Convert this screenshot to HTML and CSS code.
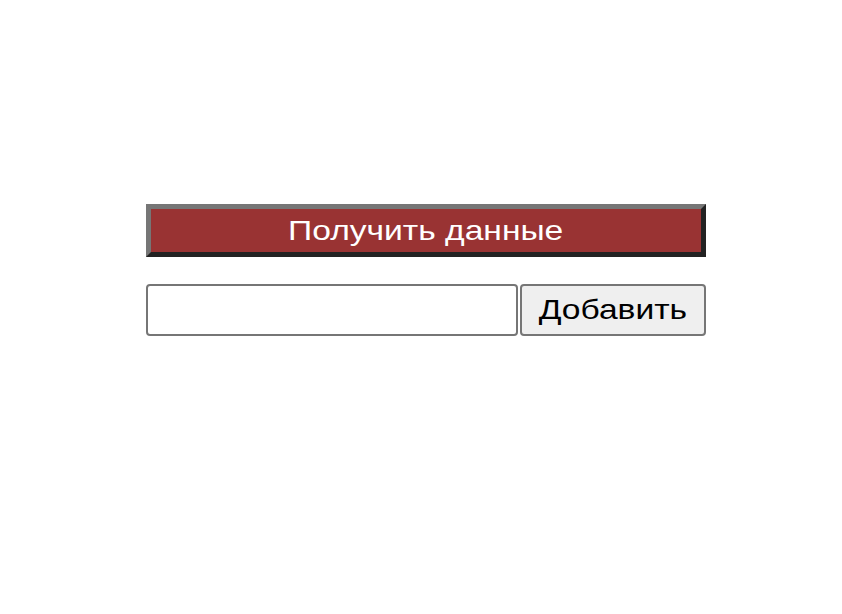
FILE: index.html
```html
<!DOCTYPE html>
<html lang="ru">
<head>
<meta charset="utf-8">
<title>Данные</title>
<link rel="stylesheet" href="styles.css">
</head>
<body>
<main class="page">
  <div class="panel">
    <button class="fetch-btn" type="button"><span class="wide">Получить данные</span></button>
    <form class="add-row">
      <input class="add-input" type="text">
      <button class="add-btn" type="button"><span class="wide">Добавить</span></button>
    </form>
  </div>
</main>
</body>
</html>
```
FILE: styles.css
```css
html, body {
  margin: 0;
  padding: 0;
  background: #ffffff;
}
body {
  font-family: "Liberation Sans", Arial, sans-serif;
}
.page {
  padding: 204px 0 0 146px;
}
.panel {
  width: 560px;
  display: flex;
  flex-direction: column;
  gap: 27px;
}
.wide {
  display: inline-block;
  transform: scaleX(1.2);
  transform-origin: center;
}
.fetch-btn {
  box-sizing: border-box;
  width: 560px;
  height: 53px;
  margin: 0;
  padding: 0;
  background: #993333;
  color: #ffffff;
  font-family: "Liberation Sans", Arial, sans-serif;
  font-size: 28px;
  border-style: solid;
  border-width: 5px;
  border-color: #767676 #222222 #222222 #767676;
  border-radius: 0;
  cursor: pointer;
}
.add-row {
  display: flex;
  gap: 2px;
  margin: 0;
}
.add-input {
  box-sizing: border-box;
  width: 372px;
  height: 52px;
  margin: 0;
  border: 2px solid #767676;
  border-radius: 4px;
  background: #ffffff;
  font-family: "Liberation Sans", Arial, sans-serif;
  font-size: 28px;
  padding: 0 6px;
}
.add-btn {
  box-sizing: border-box;
  width: 186px;
  height: 52px;
  margin: 0;
  padding: 0;
  border: 2px solid #767676;
  border-radius: 4px;
  background: #efefef;
  color: #000000;
  font-family: "Liberation Sans", Arial, sans-serif;
  font-size: 28px;
}
```
